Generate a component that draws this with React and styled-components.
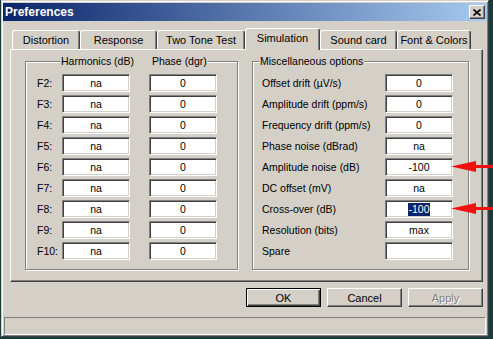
import React from 'react';
import styled, { createGlobalStyle } from 'styled-components';

const GlobalStyle = createGlobalStyle`
  html, body {
    margin: 0;
    padding: 0;
    background: #173c3c;
  }
`;

const Desktop = styled.div`
  position: relative;
  width: 493px;
  height: 339px;
  overflow: hidden;
  background: #173c3c;
`;

const Window = styled.div`
  box-sizing: border-box;
  width: 488px;
  height: 337px;
  margin-left: 1px;
  padding: 2px 1px 1px 1px;
  background: #d4d0c8;
  border: 1px solid;
  border-color: #d4d0c8 #404040 #404040 #d4d0c8;
  box-shadow: inset 1px 1px #fff, inset -1px -1px #808080;
  display: flex;
  flex-direction: column;
  font-family: "Liberation Sans", Arial, sans-serif;
  font-size: 11px;
  color: #000;
`;

const TitleBar = styled.div`
  height: 18px;
  display: flex;
  align-items: center;
  justify-content: space-between;
  padding: 0 2px 0 2px;
  background: linear-gradient(to right, #0a246a, #a6caf0);
`;

const Title = styled.span`
  color: #fff;
  font-weight: bold;
  font-size: 12px;
`;

const CloseButton = styled.div`
  box-sizing: border-box;
  width: 16px;
  height: 14px;
  display: flex;
  align-items: center;
  justify-content: center;
  background: #d4d0c8;
  border: 1px solid;
  border-color: #fff #404040 #404040 #fff;
  box-shadow: inset -1px -1px #808080;
`;

const Body = styled.div`
  flex: 1;
  display: flex;
  flex-direction: column;
  padding: 7px 4px 0 7px;
`;

const TabStrip = styled.div`
  height: 21px;
  display: flex;
  align-items: flex-end;
  padding-left: 2px;
`;

const Tab = styled.div`
  box-sizing: border-box;
  width: ${p => p.$w}px;
  height: ${p => (p.$active ? 22 : 19)}px;
  margin-bottom: ${p => (p.$active ? -1 : 0)}px;
  padding-bottom: ${p => (p.$active ? 4 : 1)}px;
  display: flex;
  align-items: center;
  justify-content: center;
  background: #d4d0c8;
  border: 1px solid;
  border-bottom: none;
  border-color: #fff #404040 transparent #fff;
  border-radius: 3px 3px 0 0;
  box-shadow: inset -1px 0 #808080;
  position: relative;
  z-index: ${p => (p.$active ? 1 : 0)};
  white-space: nowrap;
`;

const Panel = styled.div`
  box-sizing: border-box;
  height: 233px;
  display: flex;
  gap: 14px;
  padding: 5px 12px 0 14px;
  border: 1px solid;
  border-color: #fff #404040 #404040 #fff;
  box-shadow: inset -1px -1px #808080;
  font-size: 10.5px;
`;

const Group = styled.fieldset`
  box-sizing: border-box;
  margin: 0;
  min-inline-size: 0;
  width: ${p => p.$w}px;
  height: 215px;
  padding: 6px ${p => p.$pr}px 9px ${p => p.$pl}px;
  border: 1px solid #808080;
  box-shadow: inset 1px 1px #fff, 1px 1px #fff;
`;

const Legend = styled.legend`
  display: flex;
  gap: 18px;
  margin-left: ${p => p.$ml}px;
  padding: 0 1px;
  line-height: 13px;
  background: #d4d0c8;
`;

const Rows = styled.div`
  display: grid;
  grid-template-columns: ${p => p.$cols};
  grid-auto-rows: 18px;
  row-gap: 3px;
  align-items: center;
`;

const Label = styled.span`
  white-space: nowrap;
`;

const Field = styled.div`
  box-sizing: border-box;
  width: 68px;
  height: 18px;
  justify-self: end;
  display: flex;
  align-items: center;
  justify-content: center;
  background: #fff;
  border: 1px solid;
  border-color: #808080 #fff #fff #808080;
  box-shadow: inset 1px 1px #404040, inset -1px -1px #d4d0c8;
  line-height: 13px;
`;

const Selected = styled.span`
  background: #0a246a;
  color: #fff;
`;

const ButtonRow = styled.div`
  display: flex;
  justify-content: flex-end;
  gap: 6px;
  margin-top: 6px;
`;

const Button = styled.div`
  box-sizing: border-box;
  width: 75px;
  height: 19px;
  display: flex;
  align-items: center;
  justify-content: center;
  background: #d4d0c8;
  border: 1px solid;
  border-color: ${p => (p.$default ? '#000' : '#fff #404040 #404040 #fff')};
  box-shadow: ${p =>
    p.$default
      ? 'inset 1px 1px #fff, inset -1px -1px #404040, inset -2px -2px #808080'
      : 'inset -1px -1px #808080'};
  color: ${p => (p.$disabled ? '#808080' : '#000')};
  text-shadow: ${p => (p.$disabled ? '1px 1px #fff' : 'none')};
`;

const StatusBar = styled.div`
  box-sizing: border-box;
  height: 18px;
  margin: 10px 1px 0 1px;
  border: 1px solid;
  border-color: #808080 #fff #fff #808080;
`;

const Arrow = styled.svg`
  position: absolute;
  left: 449px;
  top: ${p => p.$top}px;
`;

const harmonics = ['F2', 'F3', 'F4', 'F5', 'F6', 'F7', 'F8', 'F9', 'F10'];

const misc = [
  ['Offset drift (\u00b5V/s)', '0'],
  ['Amplitude drift (ppm/s)', '0'],
  ['Frequency drift (ppm/s)', '0'],
  ['Phase noise (dBrad)', 'na'],
  ['Amplitude noise (dB)', '-100'],
  ['DC offset (mV)', 'na'],
  ['Cross-over (dB)', 'sel'],
  ['Resolution (bits)', 'max'],
  ['Spare', ''],
];

const tabs = [
  ['Distortion', 68],
  ['Response', 77],
  ['Two Tone Test', 88],
  ['Simulation', 75, true],
  ['Sound card', 77],
  ['Font & Colors', 74],
];

const RedArrow = ({ top }) => (
  <Arrow $top={top} width="44" height="14" viewBox="0 0 44 14">
    <polygon points="2,6.5 27,1 27,5 44,5 44,8 27,8 27,12" fill="#f01010" />
  </Arrow>
);

const App = () => (
  <Desktop>
    <GlobalStyle />
    <Window>
      <TitleBar>
        <Title>Preferences</Title>
        <CloseButton>
          <svg width="8" height="7" viewBox="0 0 8 7">
            <path d="M0.5 0.5 L7.5 6.5 M7.5 0.5 L0.5 6.5" stroke="#000" strokeWidth="1.6" />
          </svg>
        </CloseButton>
      </TitleBar>
      <Body>
        <TabStrip>
          {tabs.map(([name, w, active]) => (
            <Tab key={name} $w={w} $active={active}>{name}</Tab>
          ))}
        </TabStrip>
        <Panel>
          <Group $w={213} $pl={11} $pr={20}>
            <Legend $ml={23}>
              <span>Harmonics (dB)</span>
              <span>Phase (dgr)</span>
            </Legend>
            <Rows $cols="25px 68px 87px">
              {harmonics.map(h => (
                <React.Fragment key={h}>
                  <Label>{h}:</Label>
                  <Field>na</Field>
                  <Field>0</Field>
                </React.Fragment>
              ))}
            </Rows>
          </Group>
          <Group $w={217} $pl={9} $pr={15}>
            <Legend $ml={-3}>
              <span>Miscellaneous options</span>
            </Legend>
            <Rows $cols="1fr 68px">
              {misc.map(([label, value]) => (
                <React.Fragment key={label}>
                  <Label>{label}</Label>
                  <Field>{value === 'sel' ? <Selected>-100</Selected> : value}</Field>
                </React.Fragment>
              ))}
            </Rows>
          </Group>
        </Panel>
        <ButtonRow>
          <Button $default>OK</Button>
          <Button>Cancel</Button>
          <Button $disabled>Apply</Button>
        </ButtonRow>
      </Body>
      <StatusBar />
    </Window>
    <RedArrow top={160} />
    <RedArrow top={202} />
  </Desktop>
);

export default App;
